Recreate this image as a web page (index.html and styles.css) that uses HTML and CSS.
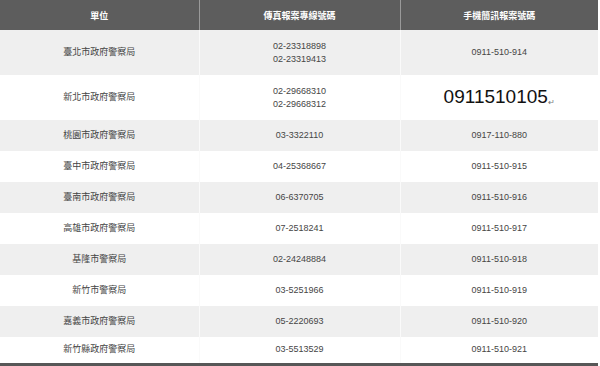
FILE: index.html
```html
<!DOCTYPE html>
<html lang="zh-Hant">
<head>
<meta charset="utf-8">
<link rel="stylesheet" href="styles.css">
</head>
<body>
<table class="tbl">
  <colgroup><col class="c1"><col class="c2"><col class="c3"></colgroup>
  <thead>
    <tr class="head"><th>單位</th><th>傳真報案專線號碼</th><th>手機簡訊報案號碼</th></tr>
  </thead>
  <tbody>
    <tr class="row tall gray"><td>臺北市政府警察局</td><td>02-23318898<br>02-23319413</td><td>0911-510-914</td></tr>
    <tr class="row tall"><td>新北市政府警察局</td><td>02-29668310<br>02-29668312</td><td><span class="big">0911510105</span><span class="ret">↵</span></td></tr>
    <tr class="row gray"><td>桃園市政府警察局</td><td>03-3322110</td><td>0917-110-880</td></tr>
    <tr class="row"><td>臺中市政府警察局</td><td>04-25368667</td><td>0911-510-915</td></tr>
    <tr class="row gray"><td>臺南市政府警察局</td><td>06-6370705</td><td>0911-510-916</td></tr>
    <tr class="row"><td>高雄市政府警察局</td><td>07-2518241</td><td>0911-510-917</td></tr>
    <tr class="row gray"><td>基隆市警察局</td><td>02-24248884</td><td>0911-510-918</td></tr>
    <tr class="row"><td>新竹市警察局</td><td>03-5251966</td><td>0911-510-919</td></tr>
    <tr class="row gray"><td>嘉義市政府警察局</td><td>05-2220693</td><td>0911-510-920</td></tr>
    <tr class="row last"><td>新竹縣政府警察局</td><td>03-5513529</td><td>0911-510-921</td></tr>
  </tbody>
</table>
</body>
</html>
```
FILE: styles.css
```css
html, body {
  margin: 0;
  padding: 0;
  background: #ffffff;
}
body {
  width: 600px;
  height: 366px;
  overflow: hidden;
  font-family: "Liberation Sans", "Noto Sans CJK TC", sans-serif;
}
.tbl {
  width: 598px;
  border-collapse: collapse;
  table-layout: fixed;
}
.c1 { width: 199px; }
.c2 { width: 201px; }
.c3 { width: 198px; }
.head {
  height: 30px;
  background: #5d5d5d;
}
.head th {
  color: #ffffff;
  font-size: 9px;
  font-weight: bold;
  text-align: center;
  vertical-align: middle;
  padding: 0;
  border-right: 1px solid #9a9a9a;
}
.head th:last-child { border-right: none; }
.row {
  height: 31px;
  background: #ffffff;
}
.row.tall { height: 45px; }
.row.gray { background: #efefef; }
.row td {
  color: #454545;
  font-size: 9px;
  line-height: 13px;
  text-align: center;
  vertical-align: middle;
  padding: 0;
  border-right: 1px solid #fafafa;
}
.row td:last-child { border-right: none; }
.row.last { height: 27px; border-bottom: 3px solid #575757; }
.big {
  font-family: "Liberation Sans", sans-serif;
  font-size: 19px;
  color: #111111;
  line-height: 22px;
}
.ret {
  font-size: 8px;
  color: #777;
  vertical-align: -2px;
}
```
